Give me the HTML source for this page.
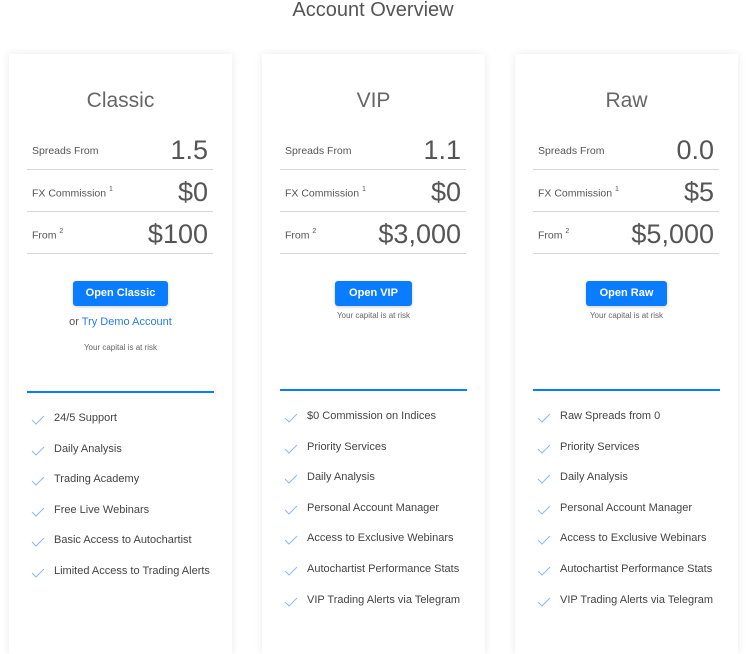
<!DOCTYPE html>
<html><head><style>
*{margin:0;padding:0;box-sizing:border-box}
body{width:746px;height:633px;background:#fff;font-family:"Liberation Sans",sans-serif;position:relative;overflow:hidden;color:#333}
.h{position:absolute;top:-1px;left:0;width:746px;text-align:center;font-size:20px;color:#555}
.card{position:absolute;top:54px;width:223px;height:600px;background:#fff;box-shadow:0 0 8px rgba(0,0,0,.09)}
.t{position:absolute;top:35px;width:100%;text-align:center;font-size:21px;color:#666}
.row{position:absolute;left:18px;width:186px;height:42px;border-bottom:1px solid #d6d6d6}
.row .l{position:absolute;left:5px;top:17px;font-size:10.5px;color:#555}
.row .l sup{font-size:7px;position:relative;top:-1px}
.row .v{position:absolute;right:5px;top:7px;font-size:27px;color:#555}
.btn{position:absolute;top:227px;height:25px;background:#0a7cff;color:#fff;font-size:11px;font-weight:bold;text-align:center;line-height:25px;border-radius:3px;box-shadow:0 1px 3px rgba(0,0,0,.2)}
.risk{position:absolute;width:100%;text-align:center;font-size:8px;color:#666}
.demo{position:absolute;top:262px;width:100%;text-align:center;font-size:11px;color:#555}
.demo span{color:#2a7de1}
.bl{position:absolute;left:18px;width:187px;height:2px;background:#0a7cff}
.li{position:absolute;left:22px;font-size:11px;color:#444}
.li svg{position:absolute;left:0}
.li span{position:absolute;left:23px;top:0;white-space:nowrap}
</style></head><body>
<div class="h">Account Overview</div>

<div class="card" style="left:9px">
<div class="t">Classic</div>
<div class="row" style="top:74px"><div class="l">Spreads From</div><div class="v">1.5</div></div>
<div class="row" style="top:116px"><div class="l">FX Commission <sup>1</sup></div><div class="v">$0</div></div>
<div class="row" style="top:158px"><div class="l">From <sup>2</sup></div><div class="v">$100</div></div>
<div class="btn" style="left:64px;width:95px">Open Classic</div>
<div class="demo">or <span>Try Demo Account</span></div>
<div class="risk" style="top:289px">Your capital is at risk</div>
<div class="bl" style="top:337px"></div>
</div>

<div class="card" style="left:262px">
<div class="t">VIP</div>
<div class="row" style="top:74px"><div class="l">Spreads From</div><div class="v">1.1</div></div>
<div class="row" style="top:116px"><div class="l">FX Commission <sup>1</sup></div><div class="v">$0</div></div>
<div class="row" style="top:158px"><div class="l">From <sup>2</sup></div><div class="v">$3,000</div></div>
<div class="btn" style="left:73px;width:77px">Open VIP</div>
<div class="risk" style="top:257px">Your capital is at risk</div>
<div class="bl" style="top:335px"></div>
</div>

<div class="card" style="left:515px">
<div class="t">Raw</div>
<div class="row" style="top:74px"><div class="l">Spreads From</div><div class="v">0.0</div></div>
<div class="row" style="top:116px"><div class="l">FX Commission <sup>1</sup></div><div class="v">$5</div></div>
<div class="row" style="top:158px"><div class="l">From <sup>2</sup></div><div class="v">$5,000</div></div>
<div class="btn" style="left:71px;width:81px">Open Raw</div>
<div class="risk" style="top:257px">Your capital is at risk</div>
<div class="bl" style="top:335px"></div>
</div>

<div id="lists"></div>
<script>
const data=[[31,412,["24/5 Support","Daily Analysis","Trading Academy","Free Live Webinars","Basic Access to Autochartist","Limited Access to Trading Alerts"]],
[284,410,["$0 Commission on Indices","Priority Services","Daily Analysis","Personal Account Manager","Access to Exclusive Webinars","Autochartist Performance Stats","VIP Trading Alerts via Telegram"]],
[537,410,["Raw Spreads from 0","Priority Services","Daily Analysis","Personal Account Manager","Access to Exclusive Webinars","Autochartist Performance Stats","VIP Trading Alerts via Telegram"]]];
let h='';
data.forEach(([x,y,a])=>a.forEach((s,i)=>{h+=`<div class="li" style="left:${x}px;top:${y+i*30.6}px"><svg width="14" height="10" viewBox="0 0 14 10" style="top:3px"><path d="M1 5 L5 9 L13 1" fill="none" stroke="#8cb8f0" stroke-width="1"/></svg><span>${s}</span></div>`}));
document.getElementById('lists').innerHTML=h;
</script>
</body></html>
